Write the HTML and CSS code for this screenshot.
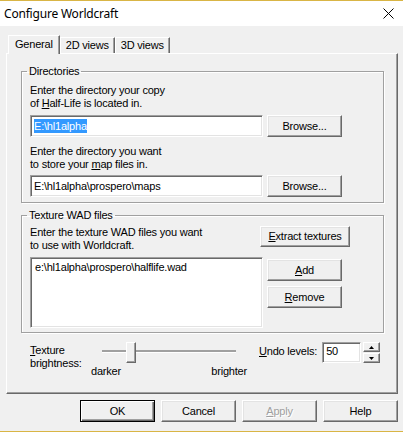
FILE: index.html
```html
<!DOCTYPE html>
<html lang="en">
<head>
    <meta charset="UTF-8">
    <title>Configure Worldcraft</title>
    <link rel="stylesheet" href="styles.css">
</head>
<body>
    <div class="window">
        <div class="titlebar">
            <span>Configure Worldcraft</span>
            <svg class="close" width="11" height="11" viewBox="0 0 11 11">
                <path d="M0.5 0.5 L10.5 10.5 M10.5 0.5 L0.5 10.5" stroke="#000" stroke-width="1" fill="none"/>
            </svg>
        </div>

        <div class="dialog">
            <div class="tabs">
                <div class="tab active">General</div>
                <div class="tab">2D views</div>
                <div class="tab">3D views</div>
            </div>

            <div class="panel">
                <fieldset class="group">
                    <legend>Directories</legend>
                    <div class="hint">Enter the directory your copy<br>of <u>H</u>alf-Life is located in.</div>
                    <div class="row first">
                        <div class="field"><span class="selected">E:\hl1alpha</span></div>
                        <button class="btn">Browse...</button>
                    </div>
                    <div class="hint spaced">Enter the directory you want<br>to store your <u>m</u>ap files in.</div>
                    <div class="row">
                        <div class="field">E:\hl1alpha\prospero\maps</div>
                        <button class="btn">Browse...</button>
                    </div>
                </fieldset>

                <fieldset class="group wad">
                    <legend>Texture WAD files</legend>
                    <div class="row top">
                        <div class="hint">Enter the texture WAD files you want<br>to use with Worldcraft.</div>
                        <button class="btn extract"><u>E</u>xtract textures</button>
                    </div>
                    <div class="row lists">
                        <div class="field listbox">e:\hl1alpha\prospero\halflife.wad</div>
                        <div class="side">
                            <button class="btn add"><u>A</u>dd</button>
                            <button class="btn remove"><u>R</u>emove</button>
                        </div>
                    </div>
                </fieldset>

                <div class="tune">
                    <div class="tune-label"><u>T</u>exture<br>brightness:</div>
                    <div class="slider">
                        <div class="slider-body">
                            <div class="track"></div>
                            <div class="thumb"></div>
                        </div>
                        <div class="slider-ends">
                            <span>darker</span>
                            <span>brighter</span>
                        </div>
                    </div>
                    <div class="undo">
                        <span class="undo-label"><u>U</u>ndo levels:</span>
                        <div class="field number">50</div>
                        <div class="spin">
                            <div class="spin-btn">
                                <svg width="5" height="3" viewBox="0 0 5 3"><path d="M2.5 0 L5 3 L0 3 Z" fill="#000"/></svg>
                            </div>
                            <div class="spin-btn">
                                <svg width="5" height="3" viewBox="0 0 5 3"><path d="M0 0 L5 0 L2.5 3 Z" fill="#000"/></svg>
                            </div>
                        </div>
                    </div>
                </div>
            </div>

            <div class="actions">
                <button class="btn default">OK</button>
                <button class="btn">Cancel</button>
                <button class="btn" disabled><u>A</u>pply</button>
                <button class="btn">Help</button>
            </div>
        </div>
    </div>
</body>
</html>
```

FILE: styles.css
```css
body {
    margin: 0;
    font-family: "Liberation Sans", Arial, sans-serif;
    font-size: 11px;
    line-height: 13px;
    letter-spacing: -0.2px;
    color: #000;
}

.window {
    width: 403px;
    height: 432px;
    box-sizing: border-box;
    border-top: 1px solid #d9b545;
    border-bottom: 1px solid #d9b545;
    background-color: #f0f0f0;
    display: flex;
    flex-direction: column;
}

.titlebar {
    height: 25px;
    background-color: #fff;
    display: flex;
    align-items: center;
    justify-content: space-between;
    padding: 0 9px 0 4px;
    font-family: "Noto Sans", sans-serif;
    font-size: 12px;
    letter-spacing: -0.2px;
}

.dialog {
    padding: 9px 5px 0 6px;
}

/* tab strip */
.tabs {
    display: flex;
    align-items: flex-end;
    height: 18px;
    margin-left: 2px;
    position: relative;
    z-index: 1;
}

.tab {
    box-sizing: border-box;
    height: 16px;
    padding: 0 5px;
    border: 1px solid;
    border-color: #fff #696969 transparent #fff;
    border-bottom: none;
    box-shadow: inset -1px 0 #a0a0a0;
    line-height: 14px;
}

.tab.active {
    height: 19px;
    margin-bottom: -1px;
    padding: 0 6px;
    line-height: 16px;
    background-color: #f0f0f0;
}

.panel {
    box-sizing: border-box;
    height: 341px;
    border: 1px solid;
    border-color: #fff #696969 #696969 #fff;
    box-shadow: inset -1px -1px #a0a0a0;
    padding: 11px 13px 0 14px;
}

/* group boxes */
.group {
    margin: 0;
    padding: 6px 33px 5px 8px;
    border: 1px solid #a0a0a0;
    box-shadow: inset 1px 1px #fff, 1px 1px #fff;
    min-width: 0;
}

.group legend {
    padding: 0 2px;
    margin-left: -3px;
    line-height: 13px;
}

.group.wad {
    margin-top: 6px;
    padding-top: 4px;
    padding-bottom: 4px;
}

.row {
    display: flex;
    gap: 4px;
    margin-top: 4px;
}

.row.first {
    margin-top: 5px;
}

.row.top {
    margin-top: 0;
    align-items: flex-start;
}

.row.lists {
    margin-top: 5px;
}

.hint.spaced {
    margin-top: 8px;
}

.field {
    box-sizing: border-box;
    width: 233px;
    height: 22px;
    background-color: #fff;
    border: 1px solid;
    border-color: #a0a0a0 #fff #fff #a0a0a0;
    box-shadow: inset 1px 1px #696969, inset -1px -1px #e3e3e3;
    padding: 4px 3px;
    white-space: nowrap;
}

.selected {
    background-color: #3399ff;
    color: #fff;
    padding: 1px 0;
}

.field.listbox {
    height: 71px;
    padding: 3px 4px;
}

.field.number {
    width: 39px;
    height: 21px;
    padding: 2px 3px;
}

/* push buttons */
.btn {
    box-sizing: border-box;
    width: 75px;
    height: 22px;
    padding: 0;
    font: inherit;
    letter-spacing: inherit;
    color: #000;
    background-color: #f0f0f0;
    border: 1px solid;
    border-color: #fff #696969 #696969 #fff;
    box-shadow: inset -1px -1px #a0a0a0, inset 1px 1px #e3e3e3;
}

.btn.default {
    border-color: #000;
    box-shadow: inset 1px 1px #fff, inset -1px -1px #696969, inset -2px -2px #a0a0a0;
}

.btn:disabled {
    color: #a0a0a0;
    text-shadow: 1px 1px #fff;
}

.btn.extract {
    width: 90px;
    height: 21px;
    margin-left: auto;
}

.side {
    display: flex;
    flex-direction: column;
}

.btn.add {
    margin-top: 2px;
}

.btn.remove {
    margin-top: 5px;
}

/* brightness and undo row */
.tune {
    display: flex;
    margin-top: 9px;
    padding-left: 9px;
}

.tune-label {
    width: 60px;
    padding-top: 2px;
}

.slider {
    width: 158px;
}

.slider-body {
    position: relative;
    box-sizing: border-box;
    height: 21px;
    padding: 8px 12px 0;
}

.track {
    box-sizing: border-box;
    height: 3px;
    border-top: 1px solid #a0a0a0;
    border-bottom: 1px solid #fff;
    background-color: #a0a0a0;
}

.thumb {
    position: absolute;
    top: 0;
    left: 36px;
    box-sizing: border-box;
    width: 10px;
    height: 21px;
    background-color: #f0f0f0;
    border: 1px solid;
    border-color: #fff #696969 #696969 #fff;
    box-shadow: inset -1px -1px #a0a0a0;
}

.slider-ends {
    display: flex;
    justify-content: space-between;
    margin-top: 2px;
    padding: 0 1px;
}

.undo {
    display: flex;
    align-items: flex-start;
    margin-left: 11px;
}

.undo-label {
    padding-top: 3px;
    margin-right: 5px;
}

.spin {
    margin-left: 2px;
    display: flex;
    flex-direction: column;
}

.spin-btn {
    box-sizing: border-box;
    width: 17px;
    height: 10px;
    margin-bottom: 1px;
    display: flex;
    align-items: center;
    justify-content: center;
    border: 1px solid;
    border-color: #fff #696969 #696969 #fff;
    box-shadow: inset -1px -1px #a0a0a0;
}

.actions {
    display: flex;
    justify-content: flex-end;
    gap: 6px;
    margin-top: 6px;
}
```
